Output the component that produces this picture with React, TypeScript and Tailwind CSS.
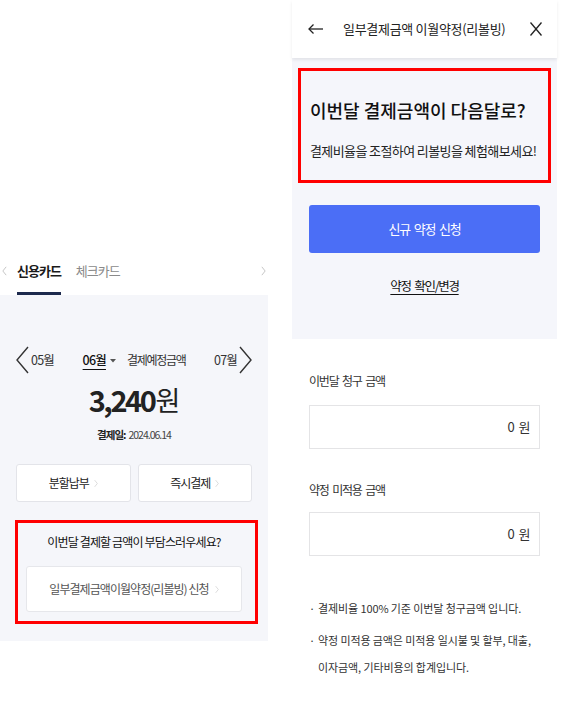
import React from 'react';

const Chev = ({ dir = 'right', className = '' }: { dir?: 'left' | 'right'; className?: string }) => (
  <svg viewBox="0 0 6 12" className={className} fill="none" stroke="currentColor" strokeWidth="1">
    {dir === 'right' ? <polyline points="1,1 5,6 1,11" /> : <polyline points="5,1 1,6 5,11" />}
  </svg>
);

const BigChev = ({ dir }: { dir: 'left' | 'right' }) => (
  <svg viewBox="0 0 15 28" className="w-[15px] h-[28px] text-[#333]" fill="none" stroke="currentColor" strokeWidth="1.4">
    {dir === 'left' ? <polyline points="13,1 2,14 13,27" /> : <polyline points="2,1 13,14 2,27" />}
  </svg>
);

function CardPanel() {
  return (
    <div className="w-[268px] shrink-0 pt-[250px]">
      {/* tabs */}
      <div className="flex h-[45px] items-stretch">
        <div className="flex items-center pb-[4px] pl-[2px] text-[#bbb]">
          <Chev dir="left" className="w-[5px] h-[10px]" />
        </div>
        <div className="ml-[10px] flex items-center pb-[1px] border-b-[3px] border-[#1d2a4d] text-[13px] tracking-[-1px] font-bold text-[#1a1a1a]">
          신용카드
        </div>
        <div className="ml-[15px] flex items-center pb-[4px] text-[13px] tracking-[-1px] text-[#8a8a8a]">
          체크카드
        </div>
        <div className="ml-auto flex items-center pb-[4px] pr-[2px] text-[#bbb]">
          <Chev className="w-[5px] h-[10px]" />
        </div>
      </div>

      <div className="h-[346px] bg-[#f5f6fa] flex flex-col items-center">
        {/* month row */}
        <div className="mt-[51px] w-full h-[28px] px-[15px] flex items-center justify-between text-[#333]">
          <div className="flex items-center gap-[1px]">
            <BigChev dir="left" />
            <span className="text-[12.5px] tracking-[-0.8px]">05월</span>
          </div>
          <div className="flex items-center">
            <span className="text-[12.5px] tracking-[-0.8px] font-medium text-[#111] underline underline-offset-[4px] decoration-[1px]">06월</span>
            <svg viewBox="0 0 8 6" className="ml-[4px] w-[6px] h-[5px] text-[#555]" fill="currentColor">
              <polygon points="0,1 8,1 4,5.5" />
            </svg>
            <span className="ml-[11px] text-[12px] tracking-[-1.3px]">결제예정금액</span>
          </div>
          <div className="flex items-center gap-[1px]">
            <span className="text-[12.5px] tracking-[-0.8px]">07월</span>
            <BigChev dir="right" />
          </div>
        </div>

        {/* amount */}
        <div className="mt-[8px] h-[36px] flex items-center text-[#222]">
          <span className="text-[29px] font-bold tracking-[-2.4px]">3,240</span>
          <span className="ml-[1px] text-[27px] tracking-[-1px]">원</span>
        </div>
        <div className="mt-[9px] h-[16px] flex items-center text-[10.5px] tracking-[-1px] text-[#444]">
          <span className="font-bold text-[#222]">결제일:</span>
          <span className="ml-[3px]">2024.06.14</span>
        </div>

        {/* buttons */}
        <div className="mt-[21px] w-full px-[16px] grid grid-cols-2 gap-[7px]">
          {['분할납부', '즉시결제'].map(label => (
            <div key={label} className="h-[38px] bg-white border border-[#e3e4e9] rounded-[3px] flex items-center justify-center text-[12px] tracking-[-1px] text-[#222]">
              {label}
              <Chev className="ml-[5px] w-[4px] h-[9px] text-[#ccc]" />
            </div>
          ))}
        </div>

        {/* revolving box */}
        <div className="mt-[18px] self-start ml-[15px] w-[243px] h-[104px] border-[3px] border-[#ff0000] pt-[11px]">
          <div className="ml-[8px] w-[216px] h-[16px] flex items-center justify-center text-[12px] tracking-[-0.85px] text-[#111]">
            이번달 결제할 금액이 부담스러우세요?
          </div>
          <div className="mt-[16px] ml-[8px] w-[216px] h-[46px] bg-white border border-[#e6e7eb] rounded-[3px] flex items-center justify-center text-[12px] tracking-[-0.95px] text-[#555]">
            일부결제금액이월약정(리볼빙) 신청
            <Chev className="ml-[6px] w-[4px] h-[9px] text-[#ccc]" />
          </div>
        </div>
      </div>
    </div>
  );
}

function RevolvingPanel() {
  return (
    <div className="w-[265px] shrink-0">
      {/* header */}
      <div className="h-[58px] flex items-center shadow-[0_2px_3px_rgba(0,0,0,0.08)] relative z-10 bg-white">
        <svg viewBox="0 0 15 10" className="ml-[16px] w-[15px] h-[10px] text-[#222]" fill="none" stroke="currentColor" strokeWidth="1.3">
          <line x1="1" y1="5" x2="15" y2="5" />
          <polyline points="5.5,0.5 1,5 5.5,9.5" />
        </svg>
        <span className="ml-[20px] text-[13px] tracking-[-0.3px] text-[#222]">일부결제금액 이월약정(리볼빙)</span>
        <svg viewBox="0 0 12 14" className="ml-auto mr-[15px] w-[12px] h-[14px] text-[#222]" fill="none" stroke="currentColor" strokeWidth="1.3">
          <line x1="0.5" y1="0.5" x2="11.5" y2="13.5" />
          <line x1="11.5" y1="0.5" x2="0.5" y2="13.5" />
        </svg>
      </div>

      <div className="h-[281px] bg-[#f5f6fb] flex flex-col">
        <div className="mt-[10px] ml-[6px] w-[253px] h-[115px] border-[3px] border-[#ff0000] pl-[9px] pt-[27px]">
          <div className="h-[24px] flex items-center text-[18px] tracking-[0px] font-medium text-[#111]">
            이번달 결제금액이 다음달로?
          </div>
          <div className="mt-[20px] h-[18px] flex items-center text-[13px] tracking-[-0.6px] text-[#222]">
            결제비율을 조절하여 리볼빙을 체험해보세요!
          </div>
        </div>
        <div className="mt-[22px] ml-[17px] w-[231px] h-[48px] rounded-[3px] bg-[#4b6ef6] flex items-center justify-center text-white text-[13px] tracking-[-1.2px] [word-spacing:2px]">
          신규 약정 신청
        </div>
        <div className="mt-[24px] ml-[17px] w-[231px] h-[18px] flex items-center justify-center">
          <span className="text-[12.5px] tracking-[-1.3px] [word-spacing:2px] text-[#111] underline underline-offset-[3px] decoration-[1px]">약정 확인/변경</span>
        </div>
      </div>

      <div className="pl-[17px] flex flex-col text-[#333]">
        <div className="mt-[34px] h-[16px] flex items-center text-[12px] tracking-[-1.2px] [word-spacing:2px]">이번달 청구 금액</div>
        <div className="mt-[16px] w-[231px] h-[44px] bg-white border border-[#e4e4e6] flex items-center justify-end pr-[9px] text-[13px] tracking-[-0.5px] [word-spacing:2px]">
          0 원
        </div>
        <div className="mt-[33px] h-[16px] flex items-center text-[12px] tracking-[-1.2px] [word-spacing:2px]">약정 미적용 금액</div>
        <div className="mt-[14px] w-[231px] h-[44px] bg-white border border-[#e4e4e6] flex items-center justify-end pr-[9px] text-[13px] tracking-[-0.5px] [word-spacing:2px]">
          0 원
        </div>

        <div className="mt-[44px] flex text-[11px] tracking-[-0.1px] leading-[16px] text-[#333]">
          <span className="w-[9px] shrink-0">·</span>
          <span>결제비율 100% 기준 이번달 청구금액 입니다.</span>
        </div>
        <div className="mt-[11px] flex text-[11px] tracking-[-0.1px] leading-[27px] text-[#333]">
          <span className="w-[9px] shrink-0">·</span>
          <span className="w-[222px]">약정 미적용 금액은 미적용 일시불 및 할부, 대출, 이자금액, 기타비용의 합계입니다.</span>
        </div>
      </div>
    </div>
  );
}

export default function App() {
  return (
    <div className="w-[588px] h-[721px] bg-white flex gap-[24px] overflow-hidden font-['Noto_Sans_CJK_KR',sans-serif]">
      <CardPanel />
      <RevolvingPanel />
    </div>
  );
}
